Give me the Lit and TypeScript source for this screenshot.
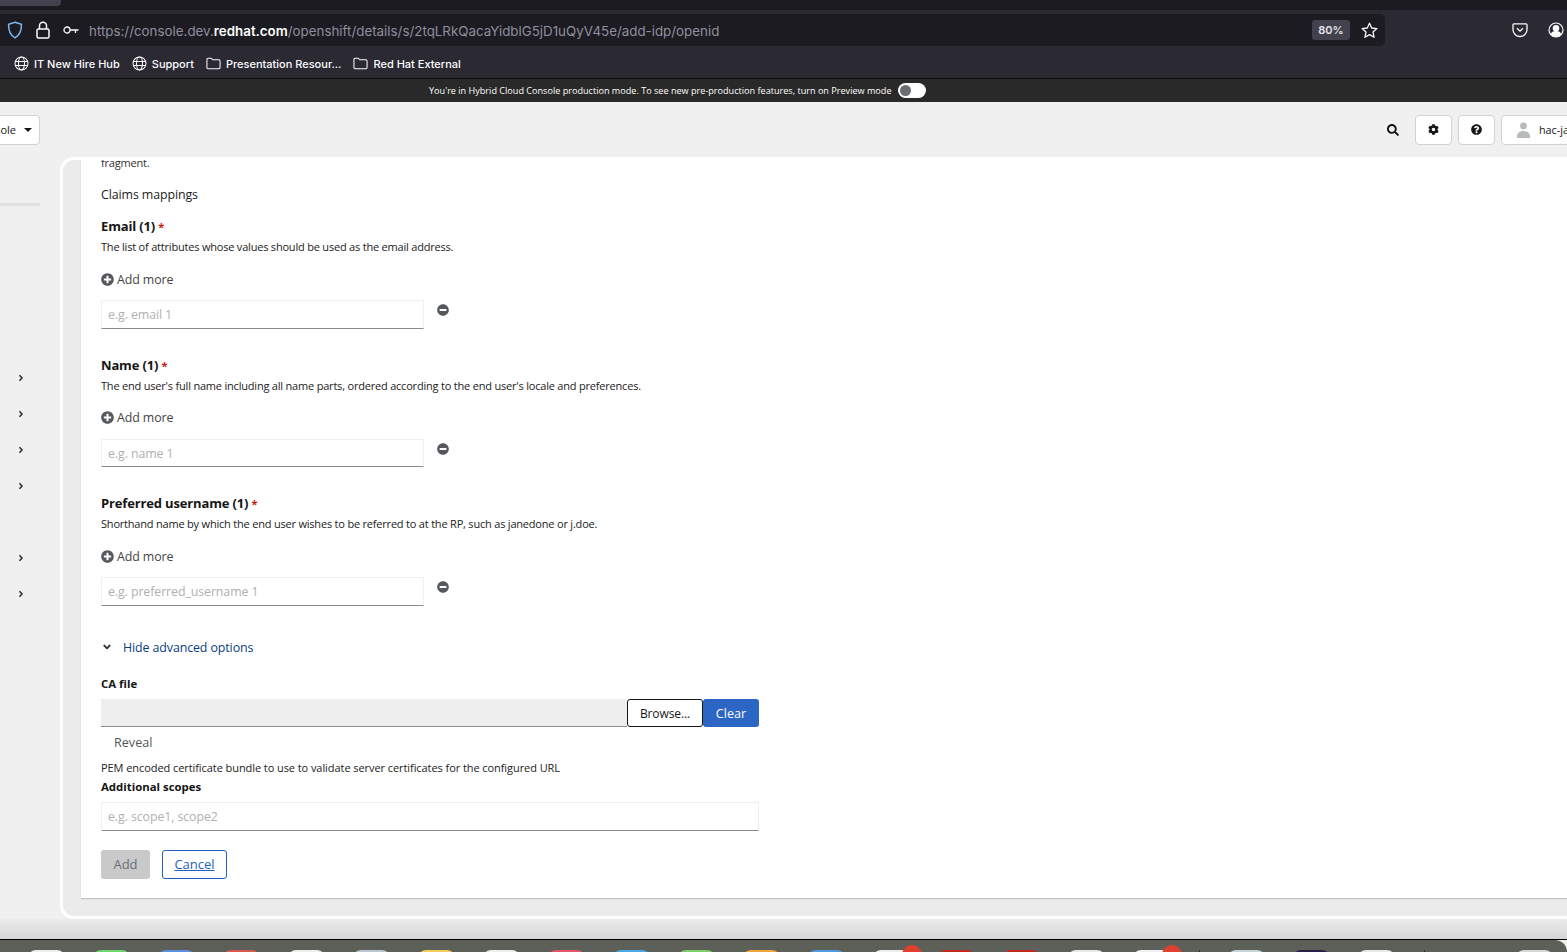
import { LitElement, html, css } from "lit";
import { customElement } from "lit/decorators.js";

const icon = (vb: string, d: string, cls: string) =>
  html`<svg class=${cls} viewBox=${vb} fill="currentColor"><path d=${d}></path></svg>`;

const P = {
  plus: "M256 8C119 8 8 119 8 256s111 248 248 248 248-111 248-248S393 8 256 8zm144 276c0 6.6-5.4 12-12 12h-92v92c0 6.6-5.4 12-12 12h-56c-6.6 0-12-5.4-12-12v-92h-92c-6.6 0-12-5.4-12-12v-56c0-6.6 5.4-12 12-12h92v-92c0-6.6 5.4-12 12-12h56c6.6 0 12 5.4 12 12v92h92c6.6 0 12 5.4 12 12v56z",
  minus: "M256 8C119 8 8 119 8 256s111 248 248 248 248-111 248-248S393 8 256 8zM124 296c-6.6 0-12-5.4-12-12v-56c0-6.6 5.4-12 12-12h264c6.6 0 12 5.4 12 12v56c0 6.6-5.4 12-12 12H124z",
  search: "M505 442.7L405.3 343c-4.5-4.5-10.6-7-17-7H372c27.6-35.3 44-79.7 44-128C416 93.1 322.9 0 208 0S0 93.1 0 208s93.1 208 208 208c48.3 0 92.7-16.4 128-44v16.3c0 6.4 2.5 12.5 7 17l99.7 99.7c9.4 9.4 24.6 9.4 33.9 0l28.3-28.3c9.4-9.4 9.4-24.6.1-34zM208 336c-70.7 0-128-57.2-128-128 0-70.7 57.2-128 128-128 70.7 0 128 57.2 128 128 0 70.7-57.2 128-128 128z",
  help: "M504 256c0 136.997-111.043 248-248 248S8 392.997 8 256C8 119.083 119.043 8 256 8s248 111.083 248 248zM262.655 90c-54.497 0-89.255 22.957-116.549 63.758-3.536 5.286-2.353 12.415 2.715 16.258l34.699 26.31c5.205 3.947 12.621 3.008 16.665-2.122 17.864-22.658 30.113-35.797 57.303-35.797 20.429 0 45.698 13.148 45.698 32.958 0 14.976-12.363 22.667-32.534 33.976C247.128 238.528 216 254.941 216 296v4c0 6.627 5.373 12 12 12h56c6.627 0 12-5.373 12-12v-1.333c0-28.462 83.186-29.647 83.186-106.667 0-58.002-60.165-102-116.531-102zM256 338c-25.365 0-46 20.635-46 46 0 25.364 20.635 46 46 46s46-20.636 46-46c0-25.365-20.635-46-46-46z",
  cog: "M487.4 315.7l-42.6-24.6c4.3-23.2 4.3-47 0-70.2l42.6-24.6c4.9-2.8 7.1-8.6 5.5-14-11.1-35.6-30-67.8-54.7-94.6-3.8-4.1-10-5.1-14.8-2.3L380.8 110c-17.9-15.4-38.5-27.3-60.8-35.1V25.8c0-5.6-3.9-10.5-9.4-11.7-36.7-8.2-74.3-7.8-109.2 0-5.5 1.2-9.4 6.1-9.4 11.7V75c-22.2 7.9-42.8 19.8-60.8 35.1L88.7 85.5c-4.9-2.8-11-1.9-14.8 2.3-24.7 26.7-43.6 58.9-54.7 94.6-1.7 5.4.6 11.2 5.5 14L67.3 221c-4.3 23.2-4.3 47 0 70.2l-42.6 24.6c-4.9 2.8-7.1 8.6-5.5 14 11.1 35.6 30 67.8 54.7 94.6 3.8 4.1 10 5.1 14.8 2.3l42.6-24.6c17.9 15.4 38.5 27.3 60.8 35.1v49.2c0 5.6 3.9 10.5 9.4 11.7 36.7 8.2 74.3 7.8 109.2 0 5.5-1.2 9.4-6.1 9.4-11.7v-49.2c22.2-7.9 42.8-19.8 60.8-35.1l42.6 24.6c4.9 2.8 11 1.9 14.8-2.3 24.7-26.7 43.6-58.9 54.7-94.6 1.5-5.5-.7-11.3-5.6-14.1zM256 336c-44.1 0-80-35.9-80-80s35.9-80 80-80 80 35.9 80 80-35.9 80-80 80z",
  right: "M224.3 273l-136 136c-9.4 9.4-24.6 9.4-33.9 0l-22.6-22.6c-9.4-9.4-9.4-24.6 0-33.9l96.4-96.4-96.4-96.4c-9.4-9.4-9.4-24.6 0-33.9L54.3 103c9.4-9.4 24.6-9.4 33.9 0l136 136c9.5 9.4 9.5 24.6.1 34z",
  down: "M143 352.3L7 216.3c-9.4-9.4-9.4-24.6 0-33.9l22.6-22.6c9.4-9.4 24.6-9.4 33.9 0l96.4 96.4 96.4-96.4c9.4-9.4 24.6-9.4 33.9 0l22.6 22.6c9.4 9.4 9.4 24.6 0 33.9l-136 136c-9.2 9.4-24.4 9.4-33.8 0z",
};

const globe = html`<svg class="bm-ic" viewBox="0 0 16 16" fill="none" stroke="currentColor" stroke-width="1.1"><circle cx="8" cy="8" r="6.9"></circle><ellipse cx="8" cy="8" rx="3.2" ry="6.9"></ellipse><path d="M1.4 5.8h13.2M1.4 10.2h13.2"></path></svg>`;
const folder = html`<svg class="bm-ic" viewBox="0 0 16 16" fill="none" stroke="currentColor" stroke-width="1.1"><path d="M1 3.6c0-.7.5-1.2 1.2-1.2h3.3l1.7 1.7h6.6c.7 0 1.2.5 1.2 1.2v7c0 .7-.5 1.2-1.2 1.2H2.2c-.7 0-1.2-.5-1.2-1.2z"></path></svg>`;

type Group = { title: string; desc: string; ph: string };
const GROUPS: Group[] = [
  { title: "Email (1)", desc: "The list of attributes whose values should be used as the email address.", ph: "e.g. email 1" },
  { title: "Name (1)", desc: "The end user's full name including all name parts, ordered according to the end user's locale and preferences.", ph: "e.g. name 1" },
  { title: "Preferred username (1)", desc: "Shorthand name by which the end user wishes to be referred to at the RP, such as janedone or j.doe.", ph: "e.g. preferred_username 1" },
];

const DOCK = [
  { c: "#eeeeee" }, { c: "#6fd66f" }, { c: "#5b8fe0" }, { c: "#d9594c" }, { c: "#eeeeee" }, { c: "#b9c8d0" },
  { c: "#f1cf5a" }, { c: "#eeeeee" }, { c: "#e0566a" }, { c: "#49a9e8" }, { c: "#7ccf6a" }, { c: "#efa63c" },
  { c: "#4f9be0" }, { c: "#eeeeee", badge: true }, { c: "#c4281c" }, { c: "#c4281c" }, { c: "#e8e8e8" }, { c: "#f2f2f2", badge: true },
];
const DOCK2 = ["#c4d4da", "#2a1f45", "#e8e8e8"];

@customElement("app-root")
export class AppRoot extends LitElement {
  static styles = css`
    :host { display: block; width: 1567px; height: 952px; overflow: hidden; background: #f0f0f0;
      font-family: "Open Sans", "Noto Sans", sans-serif; color: #151515; }
    * { box-sizing: border-box; }
    .tabs { height: 10px; background: #1c1b22; }
    .tab { width: 61px; height: 6px; background: #42414d; border-radius: 0 0 4px 0; }
    .toolbar { height: 36px; background: #2b2a33; padding-top: 4px; display: flex; }
    .url { width: 1385px; height: 32px; background: #1c1b22; border-radius: 0 5px 5px 0; display: flex; align-items: center; font-family: Inter, sans-serif; }
    .url svg { flex: none; color: #fbfbfe; }
    .url .shield { width: 16px; height: 18px; margin-left: 7px; color: #7ab8f0; }
    .lock { width: 14px; height: 18px; margin-left: 13px; }
    .key { width: 16px; height: 10px; margin-left: 13px; }
    .addr { margin-left: 10px; padding-top: 1px; font-size: 13.35px; color: #8f8f9d; white-space: nowrap; flex: 1; }
    .addr b { color: #fbfbfe; font-weight: 600; }
    .zoom { width: 38px; height: 20px; margin-left: -1px; background: #42414d; border-radius: 3px; color: #e4e4e8; font-size: 11px; font-weight: 600; display: flex; align-items: center; justify-content: center; }
    .star { width: 17px; height: 17px; margin: 0 7px 0 11px; }
    .tool-r { flex: 1; display: flex; align-items: center; justify-content: flex-end; padding-right: 3px; color: #fbfbfe; gap: 20px; }
    .pocket, .acct { width: 16px; height: 16px; flex: none; }
    .bookmarks { height: 33px; background: #2b2a33; border-bottom: 1px solid #0c0c0d; display: flex; align-items: center; padding: 3px 0 0 14px; font-family: Inter, sans-serif; font-size: 11px; font-weight: 500; color: #fbfbfe; }
    .bm { display: flex; align-items: center; gap: 5px; margin-right: 12px; white-space: nowrap; }
    .bm-ic { width: 15px; height: 15px; flex: none; }
    .banner { height: 23px; background: #292929; color: #fff; display: flex; align-items: center; padding-left: 429px; font-size: 9.1px; white-space: nowrap; }
    .toggle { width: 28px; height: 15px; background: #fff; border-radius: 8px; margin-left: 6px; display: flex; align-items: center; padding-left: 2px; }
    .toggle i { width: 11px; height: 11px; border-radius: 50%; background: #6a6e73; }
    .mast { height: 55px; background: #f0f0f0; display: flex; align-items: center; }
    .select { width: 60px; margin-left: -20px; height: 30px; background: #fff; border: 1px solid #d2d2d2; border-radius: 4px; display: flex; align-items: center; justify-content: flex-end; padding-right: 7px; font-size: 11px; overflow: hidden; gap: 8px; }
    .caret { width: 0; height: 0; border: 4px solid transparent; border-top-color: #151515; border-bottom: 0; flex: none; }
    .mast-r { margin-left: auto; display: flex; align-items: center; gap: 6px; margin-right: -34px; }
    .search { width: 12px; height: 12px; margin-right: 10px; color: #151515; }
    .mbtn { width: 37px; height: 30px; background: #fff; border: 1px solid #d2d2d2; border-radius: 4px; display: flex; align-items: center; justify-content: center; }
    .mbtn svg { width: 11px; height: 11px; }
    .mast-r .user { width: 100px; justify-content: flex-start; padding-left: 14px; gap: 8px; font-size: 10.8px; color: #151515; white-space: nowrap; }
    .mast-r .user svg { width: 15px; height: 16px; color: #b8bbbe; flex: none; }
    .main { display: flex; height: 762px; }
    .side { width: 60px; flex: none; background: #f0f0f0; }
    .rule { width: 40px; height: 3px; background: #e0e0e0; margin-top: 46px; }
    .chevs { margin-top: 167px; padding-left: 18px; display: flex; flex-direction: column; }
    .chevs svg { width: 6px; height: 10px; color: #333; margin-bottom: 26px; }
    .chevs .gap { margin-bottom: 62px; }
    .frame { flex: 1; height: 762px; background: #ebebeb; border: 3px solid #fff; border-right: 0; border-radius: 14px 0 0 14px; padding: 0 0 18px 18px; overflow: hidden; min-width: 0; }
    .card { height: 738px; background: #fff; box-shadow: 0 1px 1px rgba(0,0,0,.16); padding-left: 20px; overflow: hidden; }
    .line { line-height: 20px; white-space: nowrap; }
    .frag { font-size: 11px; letter-spacing: -.2px; margin-top: -7px; color: #333; }
    .claims { font-size: 12.4px; letter-spacing: -.1px; margin-top: 12px; margin-bottom: 1px; color: #222; }
    .group { margin-top: 12px; }
    .group + .group { margin-top: 27px; }
    .title { font-size: 13px; font-weight: 700; letter-spacing: -.15px; line-height: 19px; margin-bottom: 1px; }
    .req { color: #c9190b; font-size: 11px; }
    .desc { font-size: 11px; letter-spacing: -.2px; color: #222; }
    .add { margin-top: 12px; height: 20px; display: flex; align-items: center; gap: 3px; font-size: 12.4px; letter-spacing: -.1px; color: #444; }
    .add svg { width: 13px; height: 13px; color: #55585c; }
    .row { margin-top: 11px; display: flex; align-items: flex-start; gap: 12.5px; }
    .input { width: 323px; height: 28.5px; border: 1px solid #f0f0f0; border-bottom: 1px solid #8a8d90; padding: 1px 0 0 6px; display: flex; align-items: center; font-size: 12.4px; letter-spacing: -.1px; color: #b0b0b0; background: #fff; white-space: nowrap; }
    .wide { width: 658px; margin-top: 6px; }
    .row svg { width: 12px; height: 12px; color: #55585c; margin-top: 4px; }
    .toggle-adv { margin-top: 31.5px; display: flex; align-items: center; height: 20px; font-size: 12.4px; letter-spacing: -.1px; color: #06407f; }
    .toggle-adv svg { width: 10px; height: 12px; color: #333; margin-right: 11px; margin-left: 1px; }
    .label { font-size: 11.4px; font-weight: 700; }
    .ca { margin-top: 17px; }
    .file { margin-top: 5px; width: 658px; height: 28px; display: flex; }
    .file-in { flex: 1; background: #eeeeee; border-bottom: 1px solid #8a8d90; }
    .btn { height: 28px; display: flex; align-items: center; justify-content: center; font-size: 12.6px; border-radius: 3px; flex: none; }
    .browse { width: 76px; background: #fff; border: 1px solid #151515; color: #151515; font-size: 12px; letter-spacing: -.1px; }
    .clear { width: 56px; background: #2b66c4; color: #fff; }
    .reveal { margin: 6px 0 0 13px; font-size: 12.6px; color: #555; }
    .pem { margin-top: 5px; font-size: 11px; letter-spacing: -.07px; color: #222; }
    .scopes { line-height: 18px; }
    .actions { margin-top: 19px; display: flex; gap: 12px; }
    .add-btn { width: 49px; height: 29px; background: #c9c9c9; color: #6a6e73; font-size: 13px; border-radius: 3px; display: flex; align-items: center; justify-content: center; }
    .cancel { width: 65px; height: 29px; background: #fff; border: 1px solid #1f5fc0; color: #1f5fc0; font-size: 13px; border-radius: 3px; display: flex; align-items: center; justify-content: center; text-decoration: underline; }
    .shade { height: 21px; background: linear-gradient(#ececec, #d6d6d6); border-bottom: 1px solid #000; }
    .dock { height: 12px; background: #5d6058; display: flex; padding-left: 28px; gap: 28px; overflow: hidden; border-radius: 0 12px 0 0; }
    .d { width: 37px; height: 20px; border-radius: 8px; margin-top: 10px; flex: none; position: relative; }
    .badge { position: absolute; left: 29px; top: -5px; width: 20px; height: 20px; border-radius: 50%; background: #e0402f; }
    .sep { width: 1px; height: 13px; margin-top: 10px; background: #2e2e2e; flex: none; margin-left: 1px; }
    .trash { margin-left: 63px; }
  `;

  private group(g: Group) {
    return html`<section class="group">
      <div class="line title">${g.title} <span class="req">*</span></div>
      <div class="line desc">${g.desc}</div>
      <div class="add">${icon("0 0 512 512", P.plus, "")}Add more</div>
      <div class="row"><div class="input">${g.ph}</div>${icon("0 0 512 512", P.minus, "")}</div>
    </section>`;
  }

  render() {
    const chev = (gap = false) => icon("0 0 256 512", P.right, gap ? "gap" : "");
    return html`
      <div class="tabs"><div class="tab"></div></div>
      <div class="toolbar">
        <div class="url">
          <svg class="shield" viewBox="0 0 16 18" fill="none" stroke="currentColor" stroke-width="1.5"><path d="M8 1.2 14.4 3.4c.2 6-1.6 10.6-6.4 13.4C3.200 14 1.400 9.400 1.600 3.400z"></path></svg>
          <svg class="lock" viewBox="0 0 14 18" fill="none" stroke="currentColor" stroke-width="1.5"><rect x="1" y="8" width="12" height="9" rx="1.500"></rect><path d="M3.500 8V4.800a3.500 3.500 0 0 1 7 0V8"></path></svg>
          <svg class="key" viewBox="0 0 16 10" fill="none" stroke="currentColor" stroke-width="1.3"><circle cx="4" cy="5" r="3"></circle><path d="M7 5h8.500M12.500 5v3"></path></svg>
          <span class="addr">https://console.dev.<b>redhat.com</b>/openshift/details/s/2tqLRkQacaYidblG5jD1uQyV45e/add-idp/openid</span>
          <span class="zoom">80%</span>
          <svg class="star" viewBox="0 0 17 17" fill="none" stroke="currentColor" stroke-width="1.300" stroke-linejoin="round"><path d="M8.500 1.200 10.700 6l5.200.6-3.900 3.500 1.100 5.200-4.600-2.700-4.600 2.700L5 10.100 1.100 6.600 6.300 6z"></path></svg>
        </div>
        <div class="tool-r">
          <svg class="pocket" viewBox="0 0 16 16" fill="none" stroke="currentColor" stroke-width="1.300"><path d="M2 1.800h12c.6 0 1 .4 1 1v4.700a7 7 0 0 1-14 0V2.800c0-.6.4-1 1-1z"></path><path d="M5 6.200l3 3 3-3"></path></svg>
          <svg class="acct" viewBox="0 0 16 16" fill="none" stroke="currentColor" stroke-width="1.200"><circle cx="8" cy="8" r="7"></circle><circle cx="8" cy="6.200" r="2.700" fill="currentColor"></circle><path d="M3 12.500c1-2.500 3-3 5-3s4 .5 5 3c-1.500 1.500-3 2-5 2s-3.500-.5-5-2z" fill="currentColor"></path></svg>
        </div>
      </div>
      <div class="bookmarks">
        <span class="bm">${globe}IT New Hire Hub</span>
        <span class="bm">${globe}Support</span>
        <span class="bm">${folder}Presentation Resour...</span>
        <span class="bm">${folder}Red Hat External</span>
      </div>
      <div class="banner">You're in Hybrid Cloud Console production mode. To see new pre-production features, turn on Preview mode<span class="toggle"><i></i></span></div>
      <div class="mast">
        <div class="select"><span>Console</span><i class="caret"></i></div>
        <div class="mast-r">
          ${icon("0 0 512 512", P.search, "search")}
          <div class="mbtn">${icon("0 0 512 512", P.cog, "")}</div>
          <div class="mbtn">${icon("0 0 512 512", P.help, "")}</div>
          <div class="mbtn user"><svg viewBox="0 0 15 16" fill="currentColor"><circle cx="7.500" cy="4" r="3.400"></circle><path d="M1 16c-.5-5 2.500-7 6.500-7s7 2 6.500 7z"></path></svg>hac-jaas</div>
        </div>
      </div>
      <div class="main">
        <aside class="side">
          <div class="rule"></div>
          <div class="chevs">${chev()}${chev()}${chev()}${chev(true)}${chev()}${chev()}</div>
        </aside>
        <div class="frame">
          <div class="card">
            <div class="line frag">fragment.</div>
            <div class="line claims">Claims mappings</div>
            ${GROUPS.map((g) => this.group(g))}
            <div class="toggle-adv">${icon("0 0 320 512", P.down, "")}Hide advanced options</div>
            <div class="line label ca">CA file</div>
            <div class="file"><div class="file-in"></div><div class="btn browse">Browse...</div><div class="btn clear">Clear</div></div>
            <div class="line reveal">Reveal</div>
            <div class="line pem">PEM encoded certificate bundle to use to validate server certificates for the configured URL</div>
            <div class="line label scopes">Additional scopes</div>
            <div class="input wide">e.g. scope1, scope2</div>
            <div class="actions"><div class="add-btn">Add</div><div class="cancel">Cancel</div></div>
          </div>
        </div>
      </div>
      <div class="shade"></div>
      <div class="dock">
        ${DOCK.map((i) => html`<div class="d" style="background:${i.c}">${i.badge ? html`<i class="badge"></i>` : ""}</div>`)}
        <div class="sep"></div>
        ${DOCK2.map((c) => html`<div class="d" style="background:${c}"></div>`)}
        <div class="sep"></div>
        <div class="d trash" style="background:#d8d8d8"></div>
      </div>
    `;
  }
}
